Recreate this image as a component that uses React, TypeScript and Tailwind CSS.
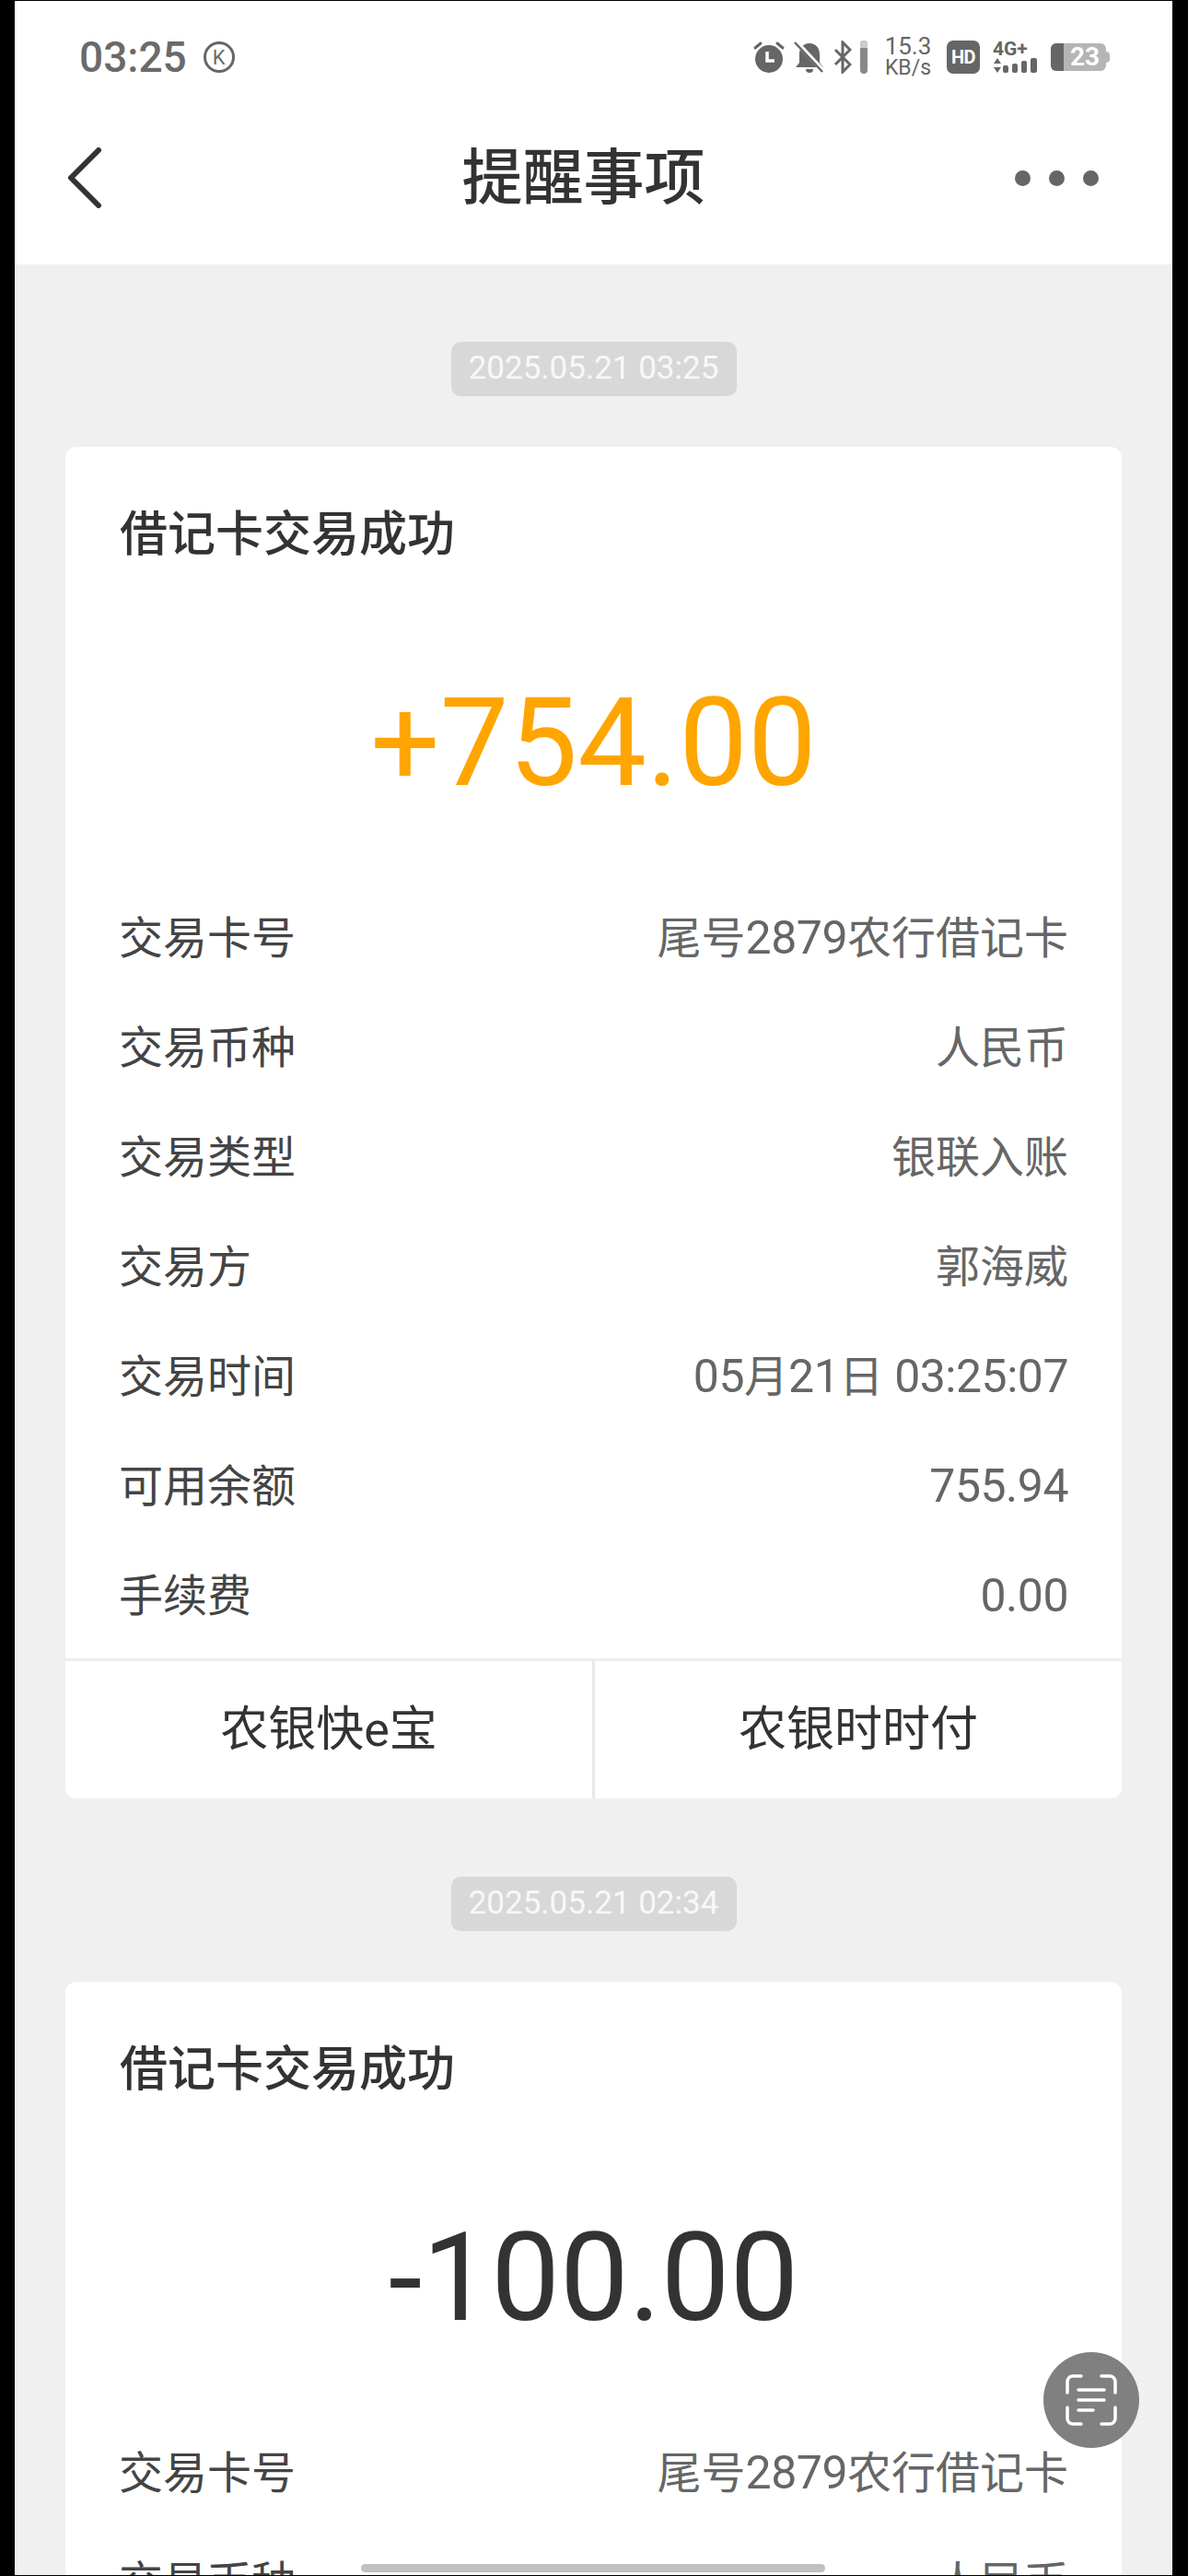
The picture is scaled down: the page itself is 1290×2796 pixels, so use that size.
import type { ReactNode } from 'react';

const FONT = "font-['Roboto','Noto_Sans_CJK_SC',sans-serif]";

type Row = { label: string; value: ReactNode };

function Num({ children }: { children: ReactNode }) {
  return <span className="text-[50px] tracking-[-0.5px]">{children}</span>;
}

const CARD_NO = <>尾号<Num>2879</Num>农行借记卡</>;

const FIRST_ROWS: Row[] = [
  { label: '交易卡号', value: CARD_NO },
  { label: '交易币种', value: '人民币' },
  { label: '交易类型', value: '银联入账' },
  { label: '交易方', value: '郭海威' },
  { label: '交易时间', value: <><Num>05</Num>月<Num>21</Num>日 <Num>03:25:07</Num></> },
  { label: '可用余额', value: <Num>755.94</Num> },
  { label: '手续费', value: <Num>0.00</Num> },
];

const SECOND_ROWS: Row[] = [
  { label: '交易卡号', value: CARD_NO },
  { label: '交易币种', value: '人民币' },
  { label: '交易类型', value: '银联入账' },
];

function StatusIcons() {
  return (
    <div className="flex items-center text-[#666]">
      {/* alarm */}
      <svg width="36" height="36" viewBox="0 0 36 36" className="mr-[9px]">
        <circle cx="18" cy="20" r="15" fill="#666" />
        <path d="M3 8l6-5M33 8l-6-5" stroke="#666" strokeWidth="3" strokeLinecap="round" />
        <path d="M16 12v10h8" fill="none" stroke="#fff" strokeWidth="3.5" />
      </svg>
      {/* muted bell */}
      <svg width="34" height="36" viewBox="0 0 34 36" className="mr-[9px]">
        <path d="M17 3c7 0 11 5 11 12v9l4 5H2l4-5V15C6 8 10 3 17 3z" fill="#666" />
        <path d="M13 31h8a4 4 0 0 1-8 0z" fill="#666" />
        <path d="M2 1l30 32" stroke="#fff" strokeWidth="5" />
        <path d="M1 2l30 32" stroke="#666" strokeWidth="2.5" />
      </svg>
      {/* bluetooth and its battery */}
      <svg width="20" height="36" viewBox="0 0 20 36" className="mr-[9px]">
        <path d="M2 10l16 16-8 8V2l8 8L2 26" fill="none" stroke="#666" strokeWidth="3" />
      </svg>
      <div className="relative mr-[17px] h-[36px] w-[8px] overflow-hidden rounded-full bg-[#888]">
        <div className="h-[8px] bg-[#ccc]" />
      </div>
      {/* speed */}
      <div className="mr-[15px] flex w-[54px] flex-col items-center text-[#666]">
        <span className="text-[26px] leading-[24px]">15.3</span>
        <span className="text-[23px] leading-[24px]">KB/s</span>
      </div>
      {/* HD */}
      <div className="mr-[14px] flex h-[36px] w-[36px] items-center justify-center rounded-[7px] bg-[#666] text-[20px] font-bold tracking-[-0.5px] text-white">
        HD
      </div>
      {/* 4G+ signal */}
      <div className="mr-[11px] flex w-[52px] flex-col">
        <span className="text-[21px] font-bold leading-[18px]">4G+</span>
        <svg width="52" height="18" viewBox="0 0 52 18">
          <path d="M1 7l4-6 4 6zM1 11l4 6 4-6z" fill="#666" />
          <rect x="11" y="9" width="6" height="8" rx="2" fill="#666" />
          <rect x="21" y="7" width="6" height="10" rx="2" fill="#666" />
          <rect x="31" y="4" width="6" height="13" rx="2" fill="#666" />
          <rect x="41" y="1" width="7" height="16" rx="2" fill="#666" />
        </svg>
      </div>
      {/* battery */}
      <div className="flex items-center">
        <div className="flex h-[30px] w-[60px] rounded-[6px] bg-[#b5b5b5]">
          <div className="w-[14px] rounded-l-[6px] bg-[#666]" />
          <span className="flex flex-1 items-center justify-center text-[28px] font-bold leading-none text-white">23</span>
        </div>
        <div className="h-[12px] w-[4px] rounded-r-full bg-[#b5b5b5]" />
      </div>
    </div>
  );
}

function TxnCard({ amount, amountClass, rows, footer }: { amount: string; amountClass: string; rows: Row[]; footer?: boolean }) {
  return (
    <div className="rounded-[12px] bg-white">
      <div className="pl-[59px] pt-[58px] text-[52px] font-medium leading-[76px] text-[#333]">借记卡交易成功</div>
      <div className={`mt-[108px] text-center text-[133px] leading-[160px] ${amountClass}`}>{amount}</div>
      <div className="mt-[72px] pb-[8px]">
        {rows.map(r => (
          <div key={r.label} className="flex h-[119px] items-center justify-between px-[58px]">
            <span className="text-[48px] text-[#444]">{r.label}</span>
            <span className="text-[48px] text-[#666]">{r.value}</span>
          </div>
        ))}
      </div>
      {footer && (
        <div className="flex h-[152px] border-t-[3px] border-[#eee] text-[52px] text-[#333]">
          <div className="flex flex-1 items-center justify-center border-r-[3px] border-[#e8e8e8]">农银快e宝</div>
          <div className="flex flex-1 items-center justify-center">农银时时付</div>
        </div>
      )}
    </div>
  );
}

function DateBadge({ text }: { text: string }) {
  return (
    <div className="flex justify-center">
      <div className="flex h-[59px] w-[310px] items-center justify-center rounded-[10px] bg-[#d8d8d8] text-[35px] text-[#f8f8f8]">{text}</div>
    </div>
  );
}

export default function App() {
  return (
    <div className={`relative h-[2796px] w-[1290px] overflow-hidden bg-black pb-[1px] pl-[16px] pr-[17px] pt-[1px] ${FONT}`}>
      <div className="h-full overflow-hidden bg-[#f0f0f0]">
        <div className="h-[286px] bg-white">
          {/* status bar */}
          <div className="flex h-[122px] items-center justify-between pl-[70px] pr-[68px]">
            <div className="flex items-center text-[#6a6a6a]">
              <span className="text-[46px] font-medium">03:25</span>
              <span className="ml-[18px] flex h-[34px] w-[34px] items-center justify-center rounded-full border-[3px] border-[#666] text-[22px]">K</span>
            </div>
            <StatusIcons />
          </div>
          {/* title bar */}
          <div className="relative flex h-[140px] items-center justify-center pr-[22px]">
            <svg width="42" height="66" viewBox="0 0 42 66" className="absolute left-[55px]">
              <path d="M36 3L6 33l30 30" fill="none" stroke="#333" strokeWidth="6" strokeLinecap="round" strokeLinejoin="round" />
            </svg>
            <span className="text-[66px] font-medium text-[#333]">提醒事项</span>
            <div className="absolute right-[80px] flex gap-[20px]">
              <div className="h-[17px] w-[17px] rounded-full bg-[#666]" />
              <div className="h-[17px] w-[17px] rounded-full bg-[#666]" />
              <div className="h-[17px] w-[17px] rounded-full bg-[#666]" />
            </div>
          </div>
        </div>

        <div className="px-[55px] pt-[84px]">
          <DateBadge text="2025.05.21 03:25" />
          <div className="mt-[55px]">
            <TxnCard amount="+754.00" amountClass="text-[#ffa500]" rows={FIRST_ROWS} footer />
          </div>
          <div className="mt-[85px]">
            <DateBadge text="2025.05.21 02:34" />
          </div>
          <div className="mt-[55px]">
            <TxnCard amount="-100.00" amountClass="text-[#333]" rows={SECOND_ROWS} />
          </div>
        </div>
      </div>

      {/* floating scan button */}
      <div className="absolute left-[1133px] top-[2553px] flex h-[104px] w-[104px] items-center justify-center rounded-full bg-[#808080]">
        <svg width="56" height="56" viewBox="0 0 56 56" fill="none" stroke="#fff" strokeWidth="3.5" strokeLinecap="round">
          <path d="M2 20V8a6 6 0 0 1 6-6h9M54 20V8a6 6 0 0 0-6-6h-9M2 36v12a6 6 0 0 0 6 6h9M54 36v12a6 6 0 0 1-6 6h-9" />
          <path d="M14 17h28M14 28h28M14 39h16" />
        </svg>
      </div>
      {/* home indicator */}
      <div className="absolute left-[392px] top-[2783px] h-[9px] w-[504px] rounded-full bg-[#c0c0c0]" />
    </div>
  );
}
